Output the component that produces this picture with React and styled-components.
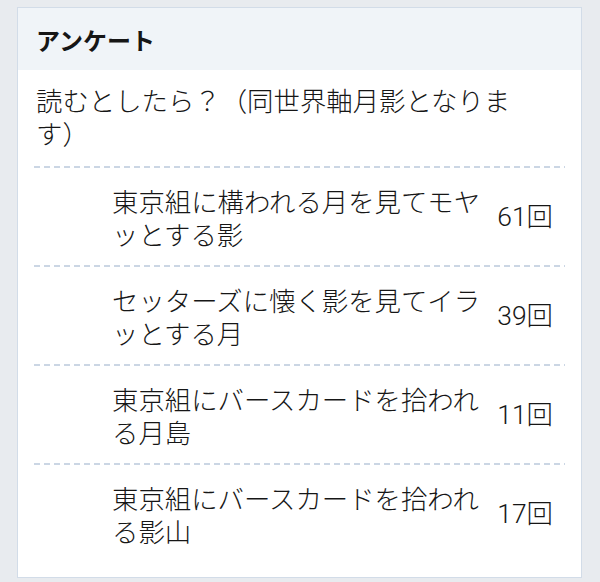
import React from 'react';
import styled, { css, createGlobalStyle } from 'styled-components';

const GlobalStyle = createGlobalStyle`
    html, body {
        margin: 0;
        background: #e8ebef;
    }
    body {
        font-family: "Noto Sans CJK JP", "Noto Sans", sans-serif;
        color: #161616;
    }
`

// long dashes under each row, the default dashed border is too fine
const dashedRule = css`
    background-image: repeating-linear-gradient(to right, #cbd6e4 0 6px, transparent 6px 10px);
    background-size: 100% 2px;
    background-position: left bottom;
    background-repeat: no-repeat;
`

const Card = styled.section`
    margin: 7px 18px 5px 17px;
    background: #fff;
    border: 1px solid #d2dce8;
`

const CardHeader = styled.header`
    height: 62px;
    display: flex;
    align-items: center;
    padding: 0 18px;
    background: #f0f4f8;
    font-size: 24px;
    font-weight: 700;
`

const CardBody = styled.div`
    padding: 0 16px 13px;
`

const Question = styled.div`
    padding: 13px 50px 19px 2px;
    font-size: 26.4px;
    font-weight: 300;
    line-height: 33px;
    ${dashedRule}
`

const OptionList = styled.ul`
    list-style: none;
    margin: 0;
    padding: 0;
`

const Option = styled.li`
    display: flex;
    align-items: center;
    gap: 8px;
    padding: 16px 12px 17px 78px;
    font-size: 26.4px;
    font-weight: 300;
    line-height: 33px;
    ${p => !p.$last && dashedRule}
`

const OptionText = styled.div`
    flex: 1;
`

const Votes = styled.div`
    white-space: nowrap;
    font-family: Roboto, "Noto Sans CJK JP", sans-serif;
`

const options = [
    { text: '東京組に構われる月を見てモヤッとする影', votes: 61 },
    { text: 'セッターズに懐く影を見てイラッとする月', votes: 39 },
    { text: '東京組にバースカードを拾われる月島', votes: 11 },
    { text: '東京組にバースカードを拾われる影山', votes: 17 },
];

const App = () => {
    return (
        <>
            <GlobalStyle />
            <Card>
                <CardHeader>アンケート</CardHeader>
                <CardBody>
                    <Question>読むとしたら？（同世界軸月影となります）</Question>
                    <OptionList>
                        {options.map((o, i) => (
                            <Option key={i} $last={i === options.length - 1}>
                                <OptionText>{o.text}</OptionText>
                                <Votes>{o.votes}回</Votes>
                            </Option>
                        ))}
                    </OptionList>
                </CardBody>
            </Card>
        </>
    );
};

export default App;
